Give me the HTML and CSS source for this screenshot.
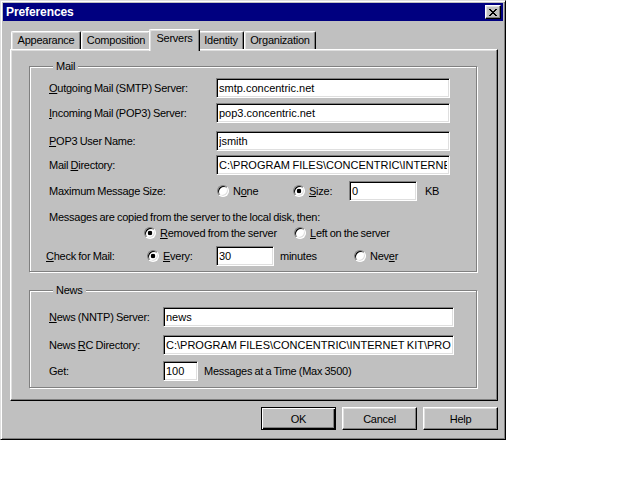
FILE: index.html
```
<!DOCTYPE html>
<html>
<head>
<meta charset="utf-8">
<title>Preferences</title>
<link rel="stylesheet" href="styles.css">
</head>
<body>
<div class="window">
  <div class="titlebar">
    <span class="title">Preferences</span>
    <span class="close"><svg width="8" height="7" viewBox="0 0 8 7" shape-rendering="crispEdges"><path fill="#000" d="M0 0h2v1H0zM6 0h2v1H6zM1 1h2v1H1zM5 1h2v1H5zM2 2h4v1H2zM3 3h2v1H3zM2 4h4v1H2zM1 5h2v1H1zM5 5h2v1H5zM0 6h2v1H0zM6 6h2v1H6z"/></svg></span>
  </div>
  <div class="tabs">
    <div class="tab t-app">Appearance</div>
    <div class="tab t-comp">Composition</div>
    <div class="tab t-serv sel">Servers</div>
    <div class="tab t-id">Identity</div>
    <div class="tab t-org">Organization</div>
  </div>
  <div class="panel">
    <fieldset class="group mail">
      <legend>Mail</legend>
      <div class="row r1"><span class="lbl"><u>O</u>utgoing Mail (SMTP) Server:</span><input class="edit wide" type="text" value="smtp.concentric.net"></div>
      <div class="row r2"><span class="lbl"><u>I</u>ncoming Mail (POP3) Server:</span><input class="edit wide" type="text" value="pop3.concentric.net"></div>
      <div class="row r3"><span class="lbl"><u>P</u>OP3 User Name:</span><input class="edit wide" type="text" value="jsmith"></div>
      <div class="row r4"><span class="lbl">Mail <u>D</u>irectory:</span><input class="edit wide" type="text" value="C:\PROGRAM FILES\CONCENTRIC\INTERNET KIT\MAIL"></div>
      <div class="row r5">
        <span class="lbl">Maximum Message Size:</span>
        <span class="opt o-none"><span class="radio"></span><span>N<u>o</u>ne</span></span>
        <span class="opt o-size"><span class="radio on"></span><span><u>S</u>ize:</span></span>
        <input class="edit size" type="text" value="0">
        <span class="kb">KB</span>
      </div>
      <div class="row r6 text">Messages are copied from the server to the local disk, then:</div>
      <div class="row r7">
        <span class="opt o-rem"><span class="radio on"></span><span><u>R</u>emoved from the server</span></span>
        <span class="opt"><span class="radio"></span><span><u>L</u>eft on the server</span></span>
      </div>
      <div class="row r8">
        <span class="lbl lbl-check"><u>C</u>heck for Mail:</span>
        <span class="opt o-every"><span class="radio on"></span><span><u>E</u>very:</span></span>
        <input class="edit every" type="text" value="30">
        <span class="minutes">minutes</span>
        <span class="opt"><span class="radio"></span><span>Nev<u>e</u>r</span></span>
      </div>
    </fieldset>
    <fieldset class="group news">
      <legend>News</legend>
      <div class="row n1"><span class="lbl lbl-news"><u>N</u>ews (NNTP) Server:</span><input class="edit nwide" type="text" value="news"></div>
      <div class="row n2"><span class="lbl lbl-news">News <u>R</u>C Directory:</span><input class="edit nwide" type="text" value="C:\PROGRAM FILES\CONCENTRIC\INTERNET KIT\PROFILE"></div>
      <div class="row n3"><span class="lbl lbl-news">Get:</span><input class="edit get" type="text" value="100"><span class="getnote">Messages at a Time (Max 3500)</span></div>
    </fieldset>
  </div>
  <div class="buttons">
    <span class="btn default">OK</span>
    <span class="btn">Cancel</span>
    <span class="btn">Help</span>
  </div>
</div>
</body>
</html>
```
FILE: styles.css
```
* { box-sizing: border-box; }
html, body { margin: 0; padding: 0; background: #fff; }
body {
  font-family: "Liberation Sans", Arial, sans-serif;
  font-size: 11px;
  letter-spacing: -0.25px;
  word-spacing: -0.5px;
  color: #000;
}
u { text-decoration: underline; text-underline-offset: 1px; }

.window {
  width: 506px;
  height: 440px;
  background: #c0c0c0;
  border: 1px solid;
  border-color: #dfdfdf #000 #000 #dfdfdf;
  box-shadow: inset 1px 1px 0 #fff, inset -1px -1px 0 #808080;
  padding: 2px;
}

.titlebar {
  height: 18px;
  background: #000080;
  color: #fff;
  display: flex;
  align-items: center;
  justify-content: space-between;
  padding: 0 2px 0 3px;
}
.title { font-weight: bold; font-size: 12px; letter-spacing: -0.1px; }
.close {
  width: 16px;
  height: 14px;
  background: #c0c0c0;
  border: 1px solid;
  border-color: #fff #000 #000 #fff;
  box-shadow: inset -1px -1px 0 #808080, inset 1px 1px 0 #dfdfdf;
  display: flex;
  align-items: center;
  justify-content: center;
  padding-right: 1px;
}
.close svg { display: block; }

.tabs {
  display: flex;
  align-items: flex-end;
  height: 20px;
  margin: 8px 0 0 8px;
}
.tab {
  height: 18px;
  line-height: 16px;
  text-align: center;
  border-top: 1px solid #fff;
  border-left: 1px solid #fff;
  border-right: 1px solid #000;
  border-top-left-radius: 2px;
  border-top-right-radius: 2px;
  box-shadow: inset -1px 0 0 #808080, inset 1px 1px 0 #dfdfdf;
  background: #c0c0c0;
  white-space: nowrap;
}
.t-app { width: 70px; }
.t-comp { width: 70px; }
.t-serv { width: 51px; }
.t-id { width: 46px; }
.t-org { width: 72px; }
.tab.sel {
  height: 22px;
  line-height: 17px;
  margin: 0 -2px -2px;
  position: relative;
  z-index: 1;
}

.panel {
  width: 488px;
  height: 352px;
  margin-left: 7px;
  border: 1px solid;
  border-color: #fff #000 #000 #fff;
  box-shadow: inset -1px -1px 0 #808080, inset 1px 1px 0 #dfdfdf;
  padding: 10px 20px 0 18px;
}

.group {
  margin: 0;
  padding: 0 0 5px 19px;
  min-width: 0;
  border: 1px solid #808080;
  box-shadow: 1px 1px 0 #fff, inset 1px 1px 0 #fff;
}
.group legend {
  padding: 0 3px;
  margin-left: 4px;
  line-height: 13px;
  height: 13px;
  background: #c0c0c0;
}
.news { margin-top: 12px; padding-bottom: 6px; }

.row {
  display: flex;
  align-items: center;
  height: 20px;
  white-space: nowrap;
}
.r1 { margin-top: 5px; }
.r2 { margin-top: 5px; }
.r3 { margin-top: 8px; }
.r4 { margin-top: 4px; }
.r5 { margin-top: 6px; }
.r6 { margin-top: 9px; height: 14px; }
.r7 { margin-top: 1px; height: 16px; padding-left: 95px; }
.r8 { margin-top: 5px; }
.n1 { margin-top: 10px; }
.n2 { margin-top: 8px; }
.n3 { margin-top: 6px; }

.lbl { width: 167px; flex: none; }
.lbl-check { width: 101px; margin-left: -3px; }
.lbl-news { width: 114px; }

.edit {
  height: 20px;
  margin: 0;
  padding: 0 2px;
  font: inherit;
  letter-spacing: 0;
  word-spacing: -0.5px;
  color: #000;
  background: #fff;
  border: 1px solid;
  border-color: #808080 #fff #fff #808080;
  box-shadow: inset 1px 1px 0 #000, inset -1px -1px 0 #dfdfdf;
  outline: none;
  flex: none;
}
.wide { width: 234px; }
.size { width: 68px; }
.every { width: 58px; }
.nwide { width: 291px; }
.get { width: 35px; }

.opt { display: flex; align-items: center; gap: 4px; flex: none; }
.o-none { width: 76px; margin-left: 1px; }
.o-size { width: 56px; }
.o-rem { width: 150px; }
.o-every { width: 69px; }
.kb { margin-left: 8px; }
.minutes { width: 74px; margin-left: 6px; flex: none; }
.getnote { margin-left: 6px; }

.radio {
  width: 12px;
  height: 12px;
  flex: none;
  border-radius: 50%;
  border: 1px solid;
  border-color: #808080 #fff #fff #808080;
  background: #fff;
  box-shadow: inset 1px 1px 0 #000, inset -1px -1px 0 #dfdfdf;
}
.radio.on {
  background: radial-gradient(circle, #000 0 2px, #fff 2.6px);
}

.buttons {
  display: flex;
  justify-content: flex-end;
  gap: 6px;
  margin-top: 6px;
  padding-right: 5px;
}
.btn {
  width: 75px;
  height: 23px;
  display: flex;
  align-items: center;
  justify-content: center;
  border: 1px solid;
  border-color: #fff #000 #000 #fff;
  box-shadow: inset -1px -1px 0 #808080, inset 1px 1px 0 #dfdfdf;
}
.btn.default {
  border-color: #000;
  box-shadow: inset 1px 1px 0 #fff, inset -1px -1px 0 #000, inset -2px -2px 0 #808080;
}
```
